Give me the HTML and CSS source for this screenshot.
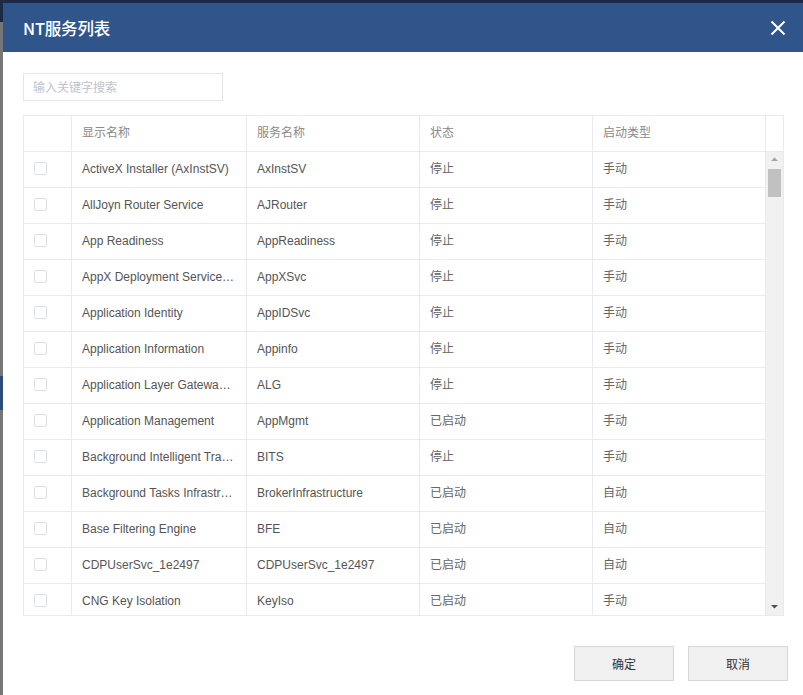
FILE: index.html
```html
<!DOCTYPE html>
<html lang="zh-CN">
<head>
<meta charset="utf-8">
<title>NT服务列表</title>
<link rel="stylesheet" href="styles.css">
</head>
<body>
<div class="backdrop">
  <div class="bg-top"></div>
  <div class="bg-side">
    <div class="bg-block"></div>
  </div>
</div>
<div class="modal">
  <div class="modal-header">
    <span class="modal-title">NT服务列表</span>
    <svg class="close" width="16" height="16" viewBox="0 0 16 16"><path d="M1.5 1.5 L14.5 14.5 M14.5 1.5 L1.5 14.5" stroke="#fff" stroke-width="2" fill="none"/></svg>
  </div>
  <div class="modal-body">
    <div class="search">输入关键字搜索</div>
    <div class="table">
      <div class="thead">
        <div class="cell"></div>
        <div class="cell">显示名称</div>
        <div class="cell">服务名称</div>
        <div class="cell">状态</div>
        <div class="cell">启动类型</div>
        <div class="cell gutter"></div>
      </div>
      <div class="tbody">
        <div class="rows">
          <div class="row"><div class="cell"><span class="check"></span></div><div class="cell">ActiveX Installer (AxInstSV)</div><div class="cell">AxInstSV</div><div class="cell zh">停止</div><div class="cell zh">手动</div></div>
          <div class="row"><div class="cell"><span class="check"></span></div><div class="cell">AllJoyn Router Service</div><div class="cell">AJRouter</div><div class="cell zh">停止</div><div class="cell zh">手动</div></div>
          <div class="row"><div class="cell"><span class="check"></span></div><div class="cell">App Readiness</div><div class="cell">AppReadiness</div><div class="cell zh">停止</div><div class="cell zh">手动</div></div>
          <div class="row"><div class="cell"><span class="check"></span></div><div class="cell">AppX Deployment Service (AppXSVC)</div><div class="cell">AppXSvc</div><div class="cell zh">停止</div><div class="cell zh">手动</div></div>
          <div class="row"><div class="cell"><span class="check"></span></div><div class="cell">Application Identity</div><div class="cell">AppIDSvc</div><div class="cell zh">停止</div><div class="cell zh">手动</div></div>
          <div class="row"><div class="cell"><span class="check"></span></div><div class="cell">Application Information</div><div class="cell">Appinfo</div><div class="cell zh">停止</div><div class="cell zh">手动</div></div>
          <div class="row"><div class="cell"><span class="check"></span></div><div class="cell">Application Layer Gateway Service</div><div class="cell">ALG</div><div class="cell zh">停止</div><div class="cell zh">手动</div></div>
          <div class="row"><div class="cell"><span class="check"></span></div><div class="cell">Application Management</div><div class="cell">AppMgmt</div><div class="cell zh">已启动</div><div class="cell zh">手动</div></div>
          <div class="row"><div class="cell"><span class="check"></span></div><div class="cell">Background Intelligent Transfer Service</div><div class="cell">BITS</div><div class="cell zh">停止</div><div class="cell zh">手动</div></div>
          <div class="row"><div class="cell"><span class="check"></span></div><div class="cell">Background Tasks Infrastructure Service</div><div class="cell">BrokerInfrastructure</div><div class="cell zh">已启动</div><div class="cell zh">自动</div></div>
          <div class="row"><div class="cell"><span class="check"></span></div><div class="cell">Base Filtering Engine</div><div class="cell">BFE</div><div class="cell zh">已启动</div><div class="cell zh">自动</div></div>
          <div class="row"><div class="cell"><span class="check"></span></div><div class="cell">CDPUserSvc_1e2497</div><div class="cell">CDPUserSvc_1e2497</div><div class="cell zh">已启动</div><div class="cell zh">自动</div></div>
          <div class="row"><div class="cell"><span class="check"></span></div><div class="cell">CNG Key Isolation</div><div class="cell">KeyIso</div><div class="cell zh">已启动</div><div class="cell zh">手动</div></div>
          <div class="row"><div class="cell"><span class="check"></span></div><div class="cell">COM+ Event System</div><div class="cell">EventSystem</div><div class="cell zh">已启动</div><div class="cell zh">自动</div></div>
        </div>
        <div class="vscroll">
          <svg class="arrow" width="17" height="14" viewBox="0 0 17 14"><path d="M5 9 L12 9 L8.5 5.5 Z" fill="#a3a3a3"/></svg>
          <div class="thumb"></div>
          <div class="track-fill"></div>
          <svg class="arrow" width="17" height="14" viewBox="0 0 17 14"><path d="M5 4 L12 4 L8.5 7.5 Z" fill="#505050"/></svg>
        </div>
      </div>
    </div>
  </div>
  <div class="modal-footer">
    <button class="btn">确定</button>
    <button class="btn">取消</button>
  </div>
</div>
</body>
</html>
```

FILE: styles.css
```css
html, body {
  margin: 0;
  padding: 0;
  height: 100%;
  overflow: hidden;
}
body {
  background: #767676;
  font-family: "Liberation Sans", "Noto Sans CJK SC", sans-serif;
  font-size: 12px;
  color: #555;
}
.backdrop {
  position: absolute;
  inset: 0;
}
.bg-top {
  height: 22px;
  background: #1c2a45;
}
.bg-side {
  width: 3px;
  height: 100%;
  padding-top: 354px;
  box-sizing: border-box;
}
.bg-block {
  height: 34px;
  background: #2c4a7a;
}
.modal {
  position: absolute;
  left: 3px;
  top: 3px;
  width: 800px;
  height: 700px;
  background: #fff;
  display: flex;
  flex-direction: column;
}
.modal-header {
  height: 49px;
  flex: none;
  background: #30558b;
  display: flex;
  align-items: center;
  justify-content: space-between;
  padding: 0 17px 0 20px;
}
.modal-title {
  color: #fff;
  font-size: 16.5px;
  font-family: "Noto Sans CJK SC", "Liberation Sans", sans-serif;
  font-weight: 500;
  letter-spacing: -0.2px;
}
.close {
  display: block;
  margin-top: 1px;
}
.modal-body {
  padding: 21px 0 0 20px;
}
.search {
  width: 200px;
  height: 28px;
  box-sizing: border-box;
  border: 1px solid #e4e6eb;
  color: #c0c4cc;
  padding-left: 9px;
  line-height: 26px;
  font-family: "Noto Sans CJK SC", sans-serif;
}
.table {
  margin-top: 14px;
  width: 761px;
  border: 1px solid #e8eaee;
  box-sizing: border-box;
}
.thead, .row {
  display: grid;
  grid-template-columns: 48px 175px 173px 173px 173px;
  height: 36px;
  box-sizing: border-box;
  border-bottom: 1px solid #e8eaee;
}
.thead {
  grid-template-columns: 48px 175px 173px 173px 173px 17px;
  color: #8a8a8a;
}
.cell {
  display: block;
  border-right: 1px solid #e8eaee;
  padding: 0 10px;
  line-height: 35px;
  white-space: nowrap;
  overflow: hidden;
  text-overflow: ellipsis;
}
.zh {
  color: #666;
}
.gutter {
  border-right: none;
  padding: 0;
}
.tbody {
  height: 463px;
  overflow: hidden;
  display: flex;
}
.rows {
  width: 742px;
  flex: none;
}
.check {
  display: inline-block;
  width: 13px;
  height: 13px;
  box-sizing: border-box;
  border: 1px solid #dcdfe6;
  border-radius: 2px;
  vertical-align: middle;
  margin-top: -2px;
}
.vscroll {
  width: 17px;
  flex: none;
  background: #f1f1f1;
  display: flex;
  flex-direction: column;
  align-items: center;
}
.arrow {
  display: block;
  flex: none;
}
.thumb {
  width: 13px;
  height: 28px;
  background: #c1c1c1;
  margin-top: 3px;
  flex: none;
}
.track-fill {
  flex: 1;
}
.modal-footer {
  display: flex;
  justify-content: flex-end;
  gap: 14px;
  padding: 30px 15px 0 0;
}
.btn {
  width: 100px;
  height: 35px;
  background: #f0f0f0;
  border: 1px solid #d7d7d7;
  color: #333;
  font-size: 12px;
  font-family: "Noto Sans CJK SC", sans-serif;
  padding: 0;
  margin: 0;
}
```
